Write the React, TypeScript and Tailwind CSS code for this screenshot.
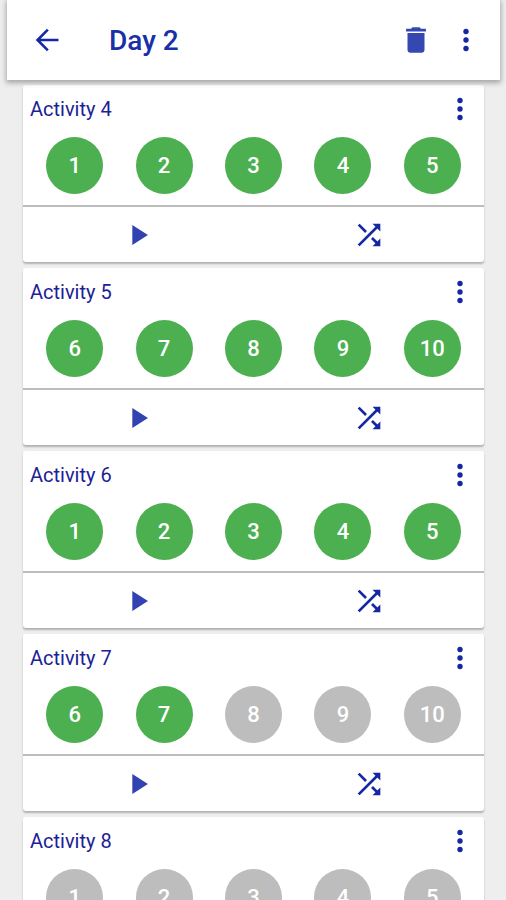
import React from 'react';
import { MdDelete, MdPlayArrow } from 'react-icons/md';

type Activity = {
  id: number;
  exercises: number[];
  done: number;
};

const activities: Activity[] = [
  { id: 4, exercises: [1, 2, 3, 4, 5], done: 5 },
  { id: 5, exercises: [6, 7, 8, 9, 10], done: 5 },
  { id: 6, exercises: [1, 2, 3, 4, 5], done: 5 },
  { id: 7, exercises: [6, 7, 8, 9, 10], done: 2 },
  { id: 8, exercises: [1, 2, 3, 4, 5], done: 0 },
];

function BackIcon() {
  return (
    <svg viewBox="0 0 24 24" className="size-[34px]" fill="none" stroke="currentColor" strokeWidth="1.8">
      <path d="M19.4 12H5M11.9 4.7L4.6 12l7.3 7.3" />
    </svg>
  );
}

function DotsIcon() {
  return (
    <svg viewBox="0 0 24 24" className="size-[34px]" fill="currentColor">
      <circle cx="12" cy="6" r="1.9" />
      <circle cx="12" cy="12" r="1.9" />
      <circle cx="12" cy="18" r="1.9" />
    </svg>
  );
}

function ShuffleIcon() {
  return (
    <svg viewBox="0 0 24 24" className="size-[34px]" fill="none" stroke="currentColor" strokeWidth="1.9">
      <path d="M4.7 4.7l5.2 5.2M4.7 19.3L18.4 5.6M14.1 14.1l4.3 4.3" />
      <path d="M14.5 4H20v5.5zM14.5 20H20v-5.5z" fill="currentColor" stroke="none" />
    </svg>
  );
}

function Header() {
  return (
    <header className="relative z-10 ml-[7px] mr-[6px] flex h-20 shrink-0 items-center bg-white pl-6 pr-[17px] text-[#1527a3] shadow-[0_2px_5px_1px_rgba(0,0,0,0.3)]">
      <button type="button" aria-label="Back">
        <BackIcon />
      </button>
      <h1 className="ml-11 flex-1 pt-0.5 text-[28px] leading-8 font-medium text-[#1a30a8]">Day 2</h1>
      <button type="button" aria-label="Delete day">
        <MdDelete className="size-[34px] text-[#3548b1]" />
      </button>
      <button type="button" aria-label="More options" className="ml-4">
        <DotsIcon />
      </button>
    </header>
  );
}

function ActivityCard({ activity }: { activity: Activity }) {
  return (
    <section className="shrink-0 rounded-[3px] bg-white shadow-[0_2px_2px_rgba(0,0,0,0.26)]">
      <div className="flex h-12 items-center justify-between px-[7px] text-[#1527a3]">
        <h2 className="text-[20px] leading-6 text-[#1c2295]">Activity {activity.id}</h2>
        <button type="button" aria-label={`Activity ${activity.id} options`}>
          <DotsIcon />
        </button>
      </div>

      <div className="grid grid-cols-5 justify-items-center border-b-2 border-[#bdbdbd] px-[7px] pt-1 pb-[11px]">
        {activity.exercises.map((n, i) => (
          <button
            key={n}
            type="button"
            className={`size-[57px] rounded-full text-[22px] leading-6 font-medium text-white ${
              i < activity.done ? 'bg-[#4caf50]' : 'bg-[#bdbdbd]'
            }`}
          >
            {n}
          </button>
        ))}
      </div>

      <div className="grid h-[55px] grid-cols-2 text-[#1527a3]">
        <button type="button" aria-label="Play" className="flex items-center justify-center">
          <MdPlayArrow className="size-[34px] text-[#3043b0]" />
        </button>
        <button type="button" aria-label="Shuffle" className="flex items-center justify-center">
          <ShuffleIcon />
        </button>
      </div>
    </section>
  );
}

export default function App() {
  return (
    <div className="flex h-screen flex-col overflow-hidden bg-[#eeeeee] font-[Roboto,sans-serif]">
      <Header />
      <main className="flex min-h-0 flex-1 flex-col gap-1.5 overflow-y-auto pt-[5px] pr-[22px] pb-[5px] pl-[23px] [scrollbar-width:none]">
        {activities.map((activity) => (
          <ActivityCard key={activity.id} activity={activity} />
        ))}
      </main>
    </div>
  );
}
